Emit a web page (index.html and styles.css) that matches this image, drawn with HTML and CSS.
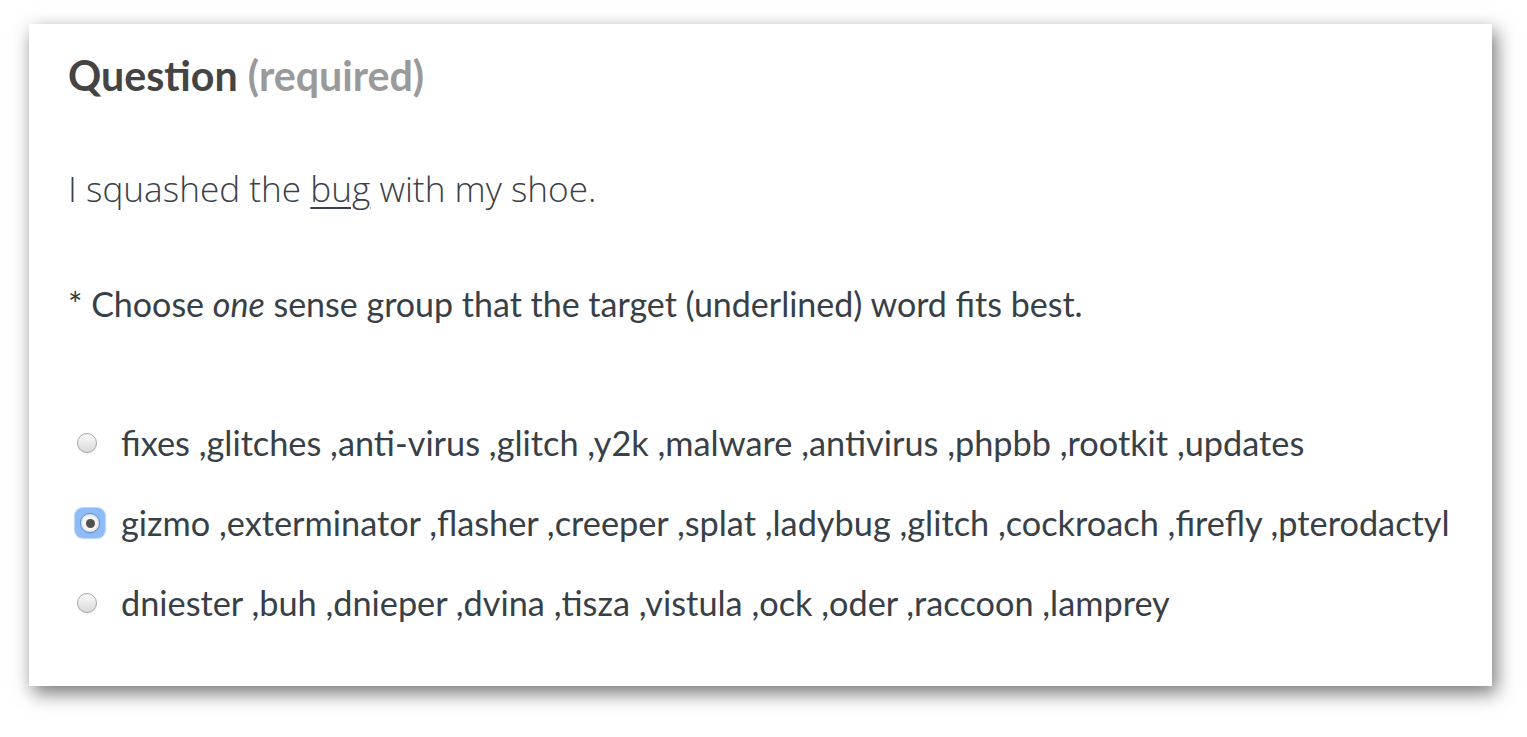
FILE: index.html
```html
<!DOCTYPE html>
<html>
<head>
<meta charset="utf-8">
<link rel="stylesheet" href="styles.css">
</head>
<body>
<div class="card">
  <h2 class="title">Question <span class="req">(required)</span></h2>
  <p class="sentence">I squashed the <u>bug</u> with my shoe.</p>
  <p class="instr">* Choose <em>one</em> sense group that the target (underlined) word fits best.</p>
  <div class="options">
    <label class="opt"><input type="radio" name="s" class="radio"><span>fixes ,glitches ,anti-virus ,glitch ,y2k ,malware ,antivirus ,phpbb ,rootkit ,updates</span></label>
    <label class="opt"><span class="ring"><input type="radio" name="s" class="radio" checked></span><span>gizmo ,exterminator ,flasher ,creeper ,splat ,ladybug ,glitch ,cockroach ,firefly ,pterodactyl</span></label>
    <label class="opt"><input type="radio" name="s" class="radio"><span>dniester ,buh ,dnieper ,dvina ,tisza ,vistula ,ock ,oder ,raccoon ,lamprey</span></label>
  </div>
</div>
</body>
</html>
```

FILE: styles.css
```css
html, body {
  margin: 0;
  background: #ffffff;
}
body {
  padding: 24px 35px 51px 29px;
  font-family: Lato, "Noto Sans", sans-serif;
  color: #384047;
}
.card {
  width: 1463px;
  height: 662px;
  box-sizing: border-box;
  background: #ffffff;
  box-shadow: 4px 7px 18px rgba(0, 0, 0, 0.55);
  padding: 26px 39px 0 39px;
}
.title {
  margin: 0;
  font-size: 41.2px;
  font-weight: 700;
  line-height: 50px;
  color: #444444;
}
.req {
  color: #9a9a9a;
}
.sentence {
  margin: 64px 0 0 0;
  font-family: "Open Sans", Lato, sans-serif;
  font-weight: 300;
  font-size: 35.2px;
  line-height: 48px;
  color: #3a4148;
}
.sentence u {
  text-decoration-thickness: 2px;
  text-underline-offset: 5px;
}
.instr {
  margin: 72px 0 0 0;
  font-size: 34px;
  line-height: 40px;
}
.options {
  margin-top: 99px;
  display: flex;
  flex-direction: column;
  gap: 40px;
}
.opt {
  display: flex;
  align-items: center;
  font-size: 34.3px;
  line-height: 40px;
}
.radio {
  appearance: none;
  -webkit-appearance: none;
  margin: 0 24px 0 9px;
  width: 20px;
  height: 20px;
  box-sizing: border-box;
  border-radius: 50%;
  border: 1px solid #a6a6a6;
  background: linear-gradient(#fbfbfb, #d9d9d9);
  box-shadow: 0 1px 1px rgba(0,0,0,0.08);
  position: relative;
  flex: none;
}
.radio:checked::after {
  content: "";
  position: absolute;
  left: 4.5px;
  top: 4.5px;
  width: 9px;
  height: 9px;
  border-radius: 50%;
  background: #505050;
}
.ring {
  display: flex;
  flex: none;
  margin: 0 16px 0 7px;
  padding: 5px;
  border-radius: 8px;
  background: #8fbcf6;
  box-shadow: 0 0 1px 1px rgba(120, 170, 240, 0.5);
}
.ring .radio {
  margin: 0;
  border-color: #5f8fd4;
  background: radial-gradient(circle, #f4f4f4 50%, #cfcfcf 100%);
}
```
